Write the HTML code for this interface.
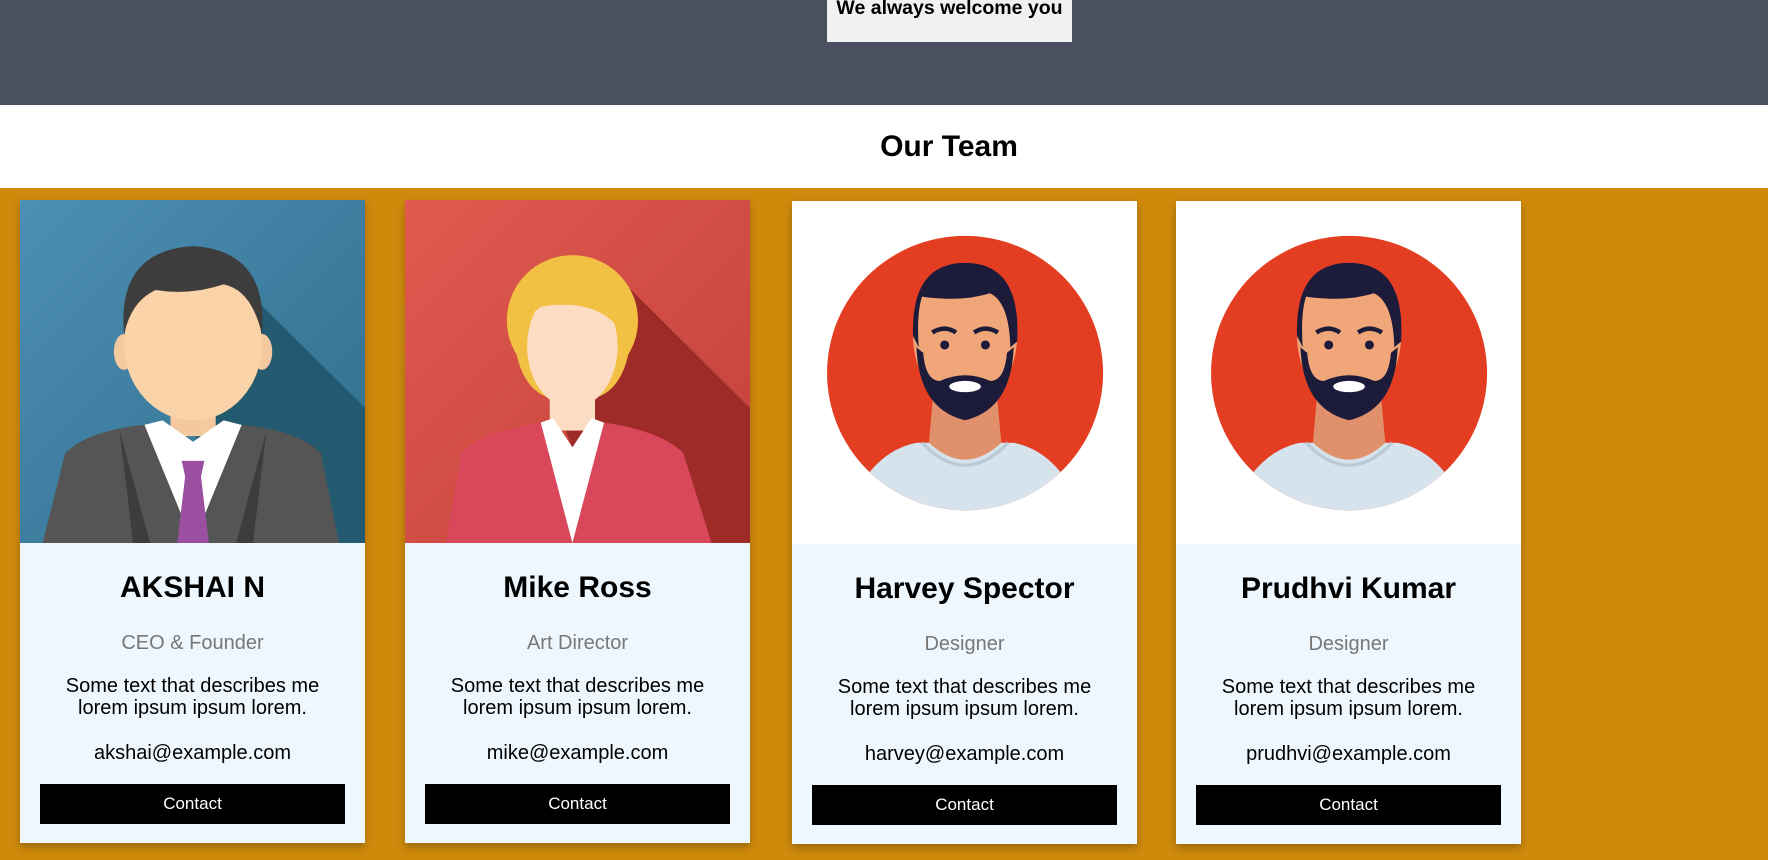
<!DOCTYPE html>
<html><head><meta charset="utf-8"><style>
*{box-sizing:border-box;margin:0;padding:0}
body{width:1768px;height:860px;overflow:hidden;font-family:"Liberation Sans",Arial,sans-serif;background:#cf8a0b}
.hdr{position:absolute;left:0;top:0;width:1768px;height:105px;background:#4a5060}
.wel{position:absolute;left:827px;top:0;width:245px;height:42px;background:#f1f1f1;text-align:center;font-weight:bold;font-size:19.5px;line-height:17px;color:#000}
.team{position:absolute;left:0;top:105px;width:1768px;height:83px;background:#fff;text-align:center;font-weight:bold;font-size:30px;line-height:83px;padding-left:130px}
.card{position:absolute;top:200px;width:345px;height:643px;background:#eef7fd;box-shadow:0 4px 8px rgba(0,0,0,.25);text-align:center}
.card svg{display:block;width:345px;height:343px}
.name{position:absolute;top:371px;left:0;right:0;font-weight:bold;font-size:30px}
.role{position:absolute;top:432px;left:0;right:0;font-size:20px;color:#777}
.desc{position:absolute;top:475px;left:0;right:0;font-size:20px;line-height:22px;color:#000}
.mail{position:absolute;top:542px;left:0;right:0;font-size:20px}
.btn{position:absolute;top:584px;left:20px;width:305px;height:40px;background:#000;color:#fff;font-size:17px;line-height:40px}
</style></head><body>
<div class="hdr"><div class="wel">We always welcome you</div></div>
<div class="team">Our Team</div>

<div class="card" style="left:20px">
<svg viewBox="0 0 305 305" preserveAspectRatio="none">
<defs><linearGradient id="g1" x1="0" y1="0" x2="1" y2="1"><stop offset="0" stop-color="#4d8fb5"/><stop offset="1" stop-color="#2f6d8a"/></linearGradient></defs>
<rect width="305" height="305" fill="url(#g1)"/>
<polygon points="180,60 305,185 305,305 200,305 150,200" fill="#245a70"/>
<rect x="133" y="160" width="40" height="50" fill="#f5c9a0"/>
<path d="M20,305 L40,225 Q60,205 110,200 L153,230 L196,200 Q246,205 266,225 L282,305Z" fill="#555"/>
<path d="M110,200 L153,305 L196,200 L180,196 L153,215 L126,196Z" fill="#fff"/>
<path d="M88,205 L115,305 L100,305Z M218,205 L191,305 L206,305Z" fill="#3d3d3d"/>
<path d="M143,232 L163,232 L160,246 L167,305 L139,305 L146,246Z" fill="#9b4fa0"/>
<ellipse cx="92" cy="135" rx="9" ry="16" fill="#f5c9a0"/><ellipse cx="214" cy="135" rx="9" ry="16" fill="#f5c9a0"/>
<ellipse cx="153" cy="128" rx="61" ry="68" fill="#fbd3a8"/>
<path d="M92,120 Q85,45 153,41 Q220,45 214,120 Q205,80 180,75 Q150,85 120,80 Q98,90 92,120Z" fill="#3d3d3d"/>
</svg>
<div class="name">AKSHAI N</div><div class="role">CEO &amp; Founder</div>
<div class="desc">Some text that describes me<br>lorem ipsum ipsum lorem.</div>
<div class="mail">akshai@example.com</div><div class="btn">Contact</div></div>

<div class="card" style="left:405px">
<svg viewBox="0 0 305 305" preserveAspectRatio="none">
<defs><linearGradient id="g2" x1="0" y1="0" x2="1" y2="1"><stop offset="0" stop-color="#e05a4f"/><stop offset="1" stop-color="#c2413b"/></linearGradient></defs>
<rect width="305" height="305" fill="url(#g2)"/>
<polygon points="190,70 305,185 305,305 180,305 140,200" fill="#9e2b28"/>
<rect x="128" y="150" width="40" height="55" fill="#fddcc4"/>
<path d="M36,305 L50,225 Q70,205 120,198 L148,230 L176,198 Q226,205 246,225 L271,305Z" fill="#d9475a"/>
<path d="M120,198 L148,305 L176,198 L165,194 L148,220 L131,194Z" fill="#fff"/>
<ellipse cx="148" cy="107" rx="58" ry="58" fill="#f2c043"/>
<path d="M96,120 Q100,165 125,175 L110,120Z M200,120 Q196,165 171,175 L186,120Z" fill="#f2c043"/>
<ellipse cx="148" cy="130" rx="40" ry="55" fill="#fddcc4"/>
<path d="M100,110 Q110,60 160,65 Q200,75 198,130 Q180,85 120,95Z" fill="#f2c043"/>
</svg>
<div class="name">Mike Ross</div><div class="role">Art Director</div>
<div class="desc">Some text that describes me<br>lorem ipsum ipsum lorem.</div>
<div class="mail">mike@example.com</div><div class="btn">Contact</div></div>

<div class="card" style="left:792px;top:201px">
<svg viewBox="0 0 305 305" preserveAspectRatio="none">
<defs><clipPath id="c3"><circle cx="153" cy="153" r="122"/></clipPath></defs>
<rect width="305" height="305" fill="#fff"/>
<circle cx="153" cy="153" r="122" fill="#e33d22"/>
<g clip-path="url(#c3)">
<path d="M40,305 Q60,225 110,215 L196,215 Q246,225 266,305Z" fill="#d6e3ec"/>
<path d="M115,215 Q153,255 191,215" fill="none" stroke="#b9cbd6" stroke-width="3"/>
<path d="M125,170 L181,170 L185,215 Q153,245 121,215Z" fill="#e0906a"/>
<ellipse cx="153" cy="120" rx="46" ry="62" fill="#f0a679"/>
<path d="M107,120 Q105,55 153,55 Q203,55 199,125 L193,130 Q192,90 175,82 Q150,90 115,85 Q110,100 112,130Z" fill="#1d1b3a"/>
<path d="M110,130 Q112,185 153,195 Q194,185 196,130 L190,135 Q188,160 175,160 Q153,150 131,160 Q118,160 116,135Z" fill="#1d1b3a"/>
<ellipse cx="153" cy="165" rx="14" ry="5" fill="#fff"/>
<circle cx="135" cy="128" r="4" fill="#1d1b3a"/><circle cx="171" cy="128" r="4" fill="#1d1b3a"/>
<path d="M124,117 Q135,110 145,117 M161,117 Q171,110 182,117" stroke="#1d1b3a" stroke-width="4" fill="none"/>
</g></svg>
<div class="name">Harvey Spector</div><div class="role">Designer</div>
<div class="desc">Some text that describes me<br>lorem ipsum ipsum lorem.</div>
<div class="mail">harvey@example.com</div><div class="btn">Contact</div></div>

<div class="card" style="left:1176px;top:201px">
<svg viewBox="0 0 305 305" preserveAspectRatio="none">
<defs><clipPath id="c4"><circle cx="153" cy="153" r="122"/></clipPath></defs>
<rect width="305" height="305" fill="#fff"/>
<circle cx="153" cy="153" r="122" fill="#e33d22"/>
<g clip-path="url(#c4)">
<path d="M40,305 Q60,225 110,215 L196,215 Q246,225 266,305Z" fill="#d6e3ec"/>
<path d="M115,215 Q153,255 191,215" fill="none" stroke="#b9cbd6" stroke-width="3"/>
<path d="M125,170 L181,170 L185,215 Q153,245 121,215Z" fill="#e0906a"/>
<ellipse cx="153" cy="120" rx="46" ry="62" fill="#f0a679"/>
<path d="M107,120 Q105,55 153,55 Q203,55 199,125 L193,130 Q192,90 175,82 Q150,90 115,85 Q110,100 112,130Z" fill="#1d1b3a"/>
<path d="M110,130 Q112,185 153,195 Q194,185 196,130 L190,135 Q188,160 175,160 Q153,150 131,160 Q118,160 116,135Z" fill="#1d1b3a"/>
<ellipse cx="153" cy="165" rx="14" ry="5" fill="#fff"/>
<circle cx="135" cy="128" r="4" fill="#1d1b3a"/><circle cx="171" cy="128" r="4" fill="#1d1b3a"/>
<path d="M124,117 Q135,110 145,117 M161,117 Q171,110 182,117" stroke="#1d1b3a" stroke-width="4" fill="none"/>
</g></svg>
<div class="name">Prudhvi Kumar</div><div class="role">Designer</div>
<div class="desc">Some text that describes me<br>lorem ipsum ipsum lorem.</div>
<div class="mail">prudhvi@example.com</div><div class="btn">Contact</div></div>
</body></html>
